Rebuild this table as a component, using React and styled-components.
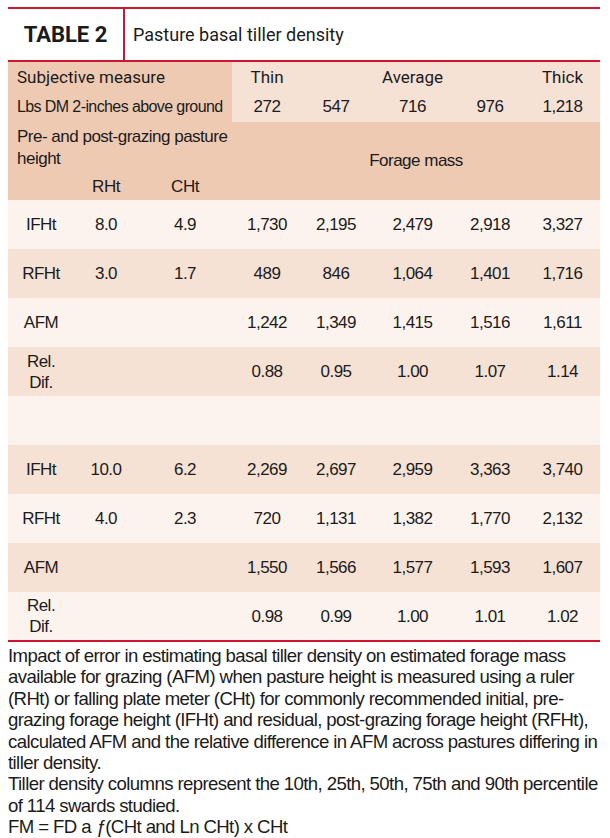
import React from 'react'
import styled, { createGlobalStyle } from 'styled-components'

const GlobalStyle = createGlobalStyle`
  html, body {
    margin: 0;
    padding: 0;
    background: #ffffff;
  }
`;

const narrow = `"Liberation Sans Narrow", "Arial Narrow", "Liberation Sans", Arial, sans-serif`;
const round = `Roboto, "Open Sans", sans-serif`;

const Page = styled.div`
  width: 592px;
  padding: 7px 10px 0 8px;
  color: #1b1b1b;
`;

const TitleBar = styled.div`
  display: flex;
  align-items: center;
  height: 51px;
  border-top: 2px solid #cf1530;
  border-bottom: 2px solid #cf1530;
`;

const TableNo = styled.div`
  width: 115px;
  height: 100%;
  display: flex;
  align-items: center;
  justify-content: center;
  border-right: 2px solid #cf1530;
  font-family: ${round};
  font-weight: 700;
  font-size: 22px;
`;

const Title = styled.div`
  padding-left: 8px;
  font-family: ${round};
  font-size: 18px;
`;

const Grid = styled.table`
  width: 592px;
  border-collapse: collapse;
  table-layout: fixed;
  border-bottom: 2px solid #cf1530;
`;

const Row = styled.tr`
  height: ${p => p.$h || 49}px;
  background: ${p => p.$bg || 'transparent'};
`;

const Cell = styled.td`
  padding: 0;
  font-family: ${p => (p.$round ? round : narrow)};
  font-size: ${p => p.$size || 17}px;
  letter-spacing: ${p => (p.$round ? '0' : p.$ls || '-0.5px')};
  line-height: ${p => (p.$lh || 20)}px;
  text-align: ${p => p.$align || 'center'};
  vertical-align: ${p => p.$valign || 'middle'};
  background: ${p => p.$bg || 'transparent'};
  padding-left: ${p => p.$pl || 0}px;
  white-space: ${p => (p.$nowrap ? 'nowrap' : 'normal')};
`;

const Caption = styled.div`
  font-family: ${narrow};
  font-size: 18.6px;
  letter-spacing: -0.6px;
  line-height: 21.4px;
  padding-top: 3px;
  white-space: nowrap;
`;

const dark = '#efcab3';
const soft = '#f6e1d5';
const light = '#fdf3ee';

const widths = [66, 64, 94, 70, 68, 85, 70, 75];

const groups = [
  [
    ['IFHt', '8.0', '4.9', '1,730', '2,195', '2,479', '2,918', '3,327'],
    ['RFHt', '3.0', '1.7', '489', '846', '1,064', '1,401', '1,716'],
    ['AFM', '', '', '1,242', '1,349', '1,415', '1,516', '1,611'],
    ['Rel.\nDif.', '', '', '0.88', '0.95', '1.00', '1.07', '1.14'],
  ],
  [
    ['IFHt', '10.0', '6.2', '2,269', '2,697', '2,959', '3,363', '3,740'],
    ['RFHt', '4.0', '2.3', '720', '1,131', '1,382', '1,770', '2,132'],
    ['AFM', '', '', '1,550', '1,566', '1,577', '1,593', '1,607'],
    ['Rel.\nDif.', '', '', '0.98', '0.99', '1.00', '1.01', '1.02'],
  ],
];

const captionLines = [
  'Impact of error in estimating basal tiller density on estimated forage mass',
  'available for grazing (AFM) when pasture height is measured using a ruler',
  '(RHt) or falling plate meter (CHt) for commonly recommended initial, pre-',
  'grazing forage height (IFHt) and residual, post-grazing forage height (RFHt),',
  'calculated AFM and the relative difference in AFM across pastures differing in',
  'tiller density.',
  'Tiller density columns represent the 10th, 25th, 50th, 75th and 90th percentile',
  'of 114 swards studied.',
];

function Lines({ text }) {
  return text.split('\n').map((line, j) => (
    <React.Fragment key={j}>{j > 0 && <br />}{line}</React.Fragment>
  ));
}

function DataRow({ cells, bg }) {
  return (
    <Row $bg={bg}>
      {cells.map((c, i) => (
        <Cell key={i} $lh={21}><Lines text={c} /></Cell>
      ))}
    </Row>
  );
}

export default function App() {
  const rows = [...groups[0], null, ...groups[1]];

  return (
    <Page>
      <GlobalStyle />
      <TitleBar>
        <TableNo>TABLE 2</TableNo>
        <Title>Pasture basal tiller density</Title>
      </TitleBar>

      <Grid>
        <colgroup>
          {widths.map((w, i) => <col key={i} style={{ width: w }} />)}
        </colgroup>
        <tbody>
          <Row $h={29} $bg={soft}>
            <Cell colSpan={3} $round $align="left" $pl={9} $bg={dark}>Subjective measure</Cell>
            <Cell $round>Thin</Cell>
            <Cell />
            <Cell $round>Average</Cell>
            <Cell />
            <Cell $round>Thick</Cell>
          </Row>
          <Row $h={31} $bg={soft}>
            <Cell colSpan={3} $align="left" $pl={9} $size={16} $ls="-0.6px" $nowrap $bg={dark}>
              Lbs DM 2-inches above ground
            </Cell>
            <Cell>272</Cell>
            <Cell>547</Cell>
            <Cell>716</Cell>
            <Cell>976</Cell>
            <Cell>1,218</Cell>
          </Row>
          <Row $h={52} $bg={dark}>
            <Cell colSpan={3} $align="left" $pl={9} $lh={22}>Pre- and post-grazing pasture height</Cell>
            <Cell colSpan={5} rowSpan={2}>Forage mass</Cell>
          </Row>
          <Row $h={26} $bg={dark}>
            <Cell />
            <Cell>RHt</Cell>
            <Cell>CHt</Cell>
          </Row>
          {rows.map((r, i) => {
            const bg = i % 2 === 0 ? light : soft;
            if (!r) return <Row key={i} $bg={bg}><Cell colSpan={8} /></Row>;
            return <DataRow key={i} cells={r} bg={bg} />;
          })}
        </tbody>
      </Grid>

      <Caption>
        {captionLines.map((l, i) => <React.Fragment key={i}>{l}<br /></React.Fragment>)}
        FM = FD a <i>ƒ</i>(CHt and Ln CHt) x CHt
      </Caption>
    </Page>
  );
}
